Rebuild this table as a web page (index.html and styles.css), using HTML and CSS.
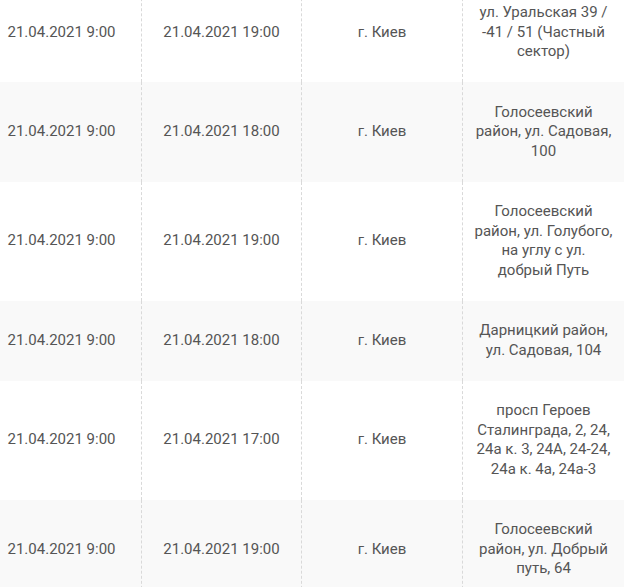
FILE: index.html
```html
<!DOCTYPE html>
<html lang="ru">
<head>
<meta charset="utf-8">
<link rel="stylesheet" href="styles.css">
</head>
<body>
<div class="wrap">
<table class="schedule">
<colgroup><col class="c1"><col class="c2"><col class="c3"><col class="c4"></colgroup>
<tbody>
<tr><td>21.04.2021 9:00</td><td>21.04.2021 19:00</td><td>г. Киев</td><td>ул. Уральская 39 / -41 / 51 (Частный сектор)</td></tr>
<tr><td>21.04.2021 9:00</td><td>21.04.2021 18:00</td><td>г. Киев</td><td>Голосеевский район, ул. Садовая, 100</td></tr>
<tr><td>21.04.2021 9:00</td><td>21.04.2021 19:00</td><td>г. Киев</td><td>Голосеевский район, ул. Голубого, на углу с ул. добрый Путь</td></tr>
<tr><td>21.04.2021 9:00</td><td>21.04.2021 18:00</td><td>г. Киев</td><td>Дарницкий район, ул. Садовая, 104</td></tr>
<tr><td>21.04.2021 9:00</td><td>21.04.2021 17:00</td><td>г. Киев</td><td>просп Героев Сталинграда, 2, 24, 24а к. 3, 24А, 24-24, 24а к. 4а, 24а-3</td></tr>
<tr><td>21.04.2021 9:00</td><td>21.04.2021 19:00</td><td>г. Киев</td><td>Голосеевский район, ул. Добрый путь, 64</td></tr>
</tbody>
</table>
</div>
</body>
</html>
```
FILE: styles.css
```css
html, body {
  margin: 0;
  padding: 0;
  background: #fff;
}
.wrap {
  width: 624px;
  height: 587px;
  overflow: hidden;
}
.schedule {
  margin: -17.5px 0 0 -18px;
  border-collapse: separate;
  border-spacing: 0;
  table-layout: fixed;
  width: 642px;
  font-family: Roboto, "Liberation Sans", sans-serif;
  font-size: 15px;
  line-height: 19.5px;
  color: #555;
}
.c1, .c2 { width: 160px; }
.c3, .c4 { width: 161px; }
.schedule td {
  padding: 20.5px 10px;
  text-align: center;
  vertical-align: middle;
  border-right: 1px dashed #d9d9d9;
}
.schedule td:last-child {
  border-right: none;
}
.schedule tr:nth-child(even) td {
  background: #f9f9f9;
}
```
